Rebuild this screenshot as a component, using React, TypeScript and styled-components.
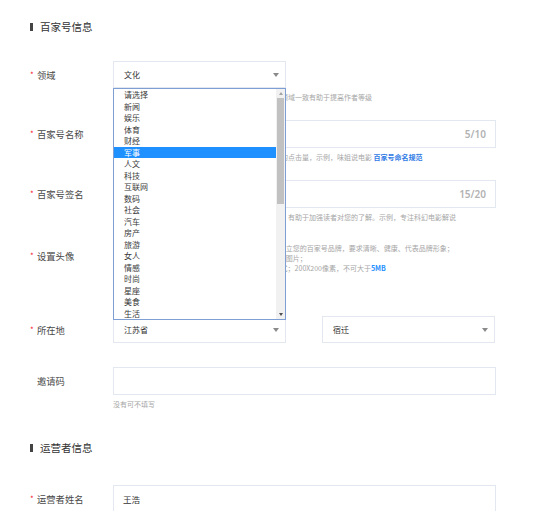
import React from "react";
import styled, { createGlobalStyle } from "styled-components";

const GlobalStyle = createGlobalStyle`
  body {
    margin: 0;
    background: #ffffff;
    font-family: "Noto Sans CJK SC", "Noto Sans", sans-serif;
    color: #333;
  }
`;

const fields = [
  "请选择", "新闻", "娱乐", "体育", "财经", "军事", "人文", "科技", "互联网", "数码",
  "社会", "汽车", "房产", "旅游", "女人", "情感", "时尚", "星座", "美食", "生活",
];

const App = (): JSX.Element => {
  return (
    <Page>
      <GlobalStyle />
      <SectionTitle $top={20}>百家号信息</SectionTitle>
      <Form $top={27}>
        <Row $mb={18}>
          <Label required>领域</Label>
          <Field>
            <SelectBox>
              文化
              <Caret />
            </SelectBox>
            <Hint>请选择与您发布内容相符的领域，保持发文内容与所选领域一致有助于提高作者等级</Hint>
            <Dropdown>
              <OptionList>
                {fields.map((f) => (
                  <Option key={f} $active={f === "军事"}>
                    {f}
                  </Option>
                ))}
              </OptionList>
              <ScrollTrack>
                <ScrollButton>
                  <ArrowUp />
                </ScrollButton>
                <ScrollThumb />
                <ScrollSpacer />
                <ScrollButton>
                  <ArrowDown />
                </ScrollButton>
              </ScrollTrack>
            </Dropdown>
          </Field>
        </Row>

        <Row $mb={18}>
          <Label required>百家号名称</Label>
          <Field>
            <InputBox>
              <InputValue />
              <Counter>5/10</Counter>
            </InputBox>
            <Hint>
              名称需简洁易记，与账号定位相符，将有助于提升文章的点击量，示例，味姐说电影 <Link>百家号命名规范</Link>
            </Hint>
          </Field>
        </Row>

        <Row $mb={20}>
          <Label required>百家号签名</Label>
          <Field>
            <InputBox>
              <InputValue />
              <Counter>15/20</Counter>
            </InputBox>
            <Hint>签名可以是您的个人介绍、创作领域或账号的定位描述，有助于加强读者对您的了解。示例，专注科幻电影解说</Hint>
          </Field>
        </Row>

        <Row $mb={18}>
          <Label required>设置头像</Label>
          <Field>
            <AvatarRow>
              <AvatarBox>+</AvatarBox>
              <AvatarNotes>
                <NoteLine>1.请上传清晰头像，头像用于建立您的百家号品牌，要求清晰、健康、代表品牌形象；</NoteLine>
                <NoteLine>2.请勿使用含二维码违规信息的图片；</NoteLine>
                <NoteLine>
                  3.图片支持jpg、jpeg、png格式；200X200像素，不可大于<Strong>5MB</Strong>
                </NoteLine>
              </AvatarNotes>
            </AvatarRow>
          </Field>
        </Row>

        <Row $mb={23}>
          <Label required>所在地</Label>
          <Field>
            <SelectPair>
              <SelectBox>
                江苏省
                <Caret />
              </SelectBox>
              <SelectBox>
                宿迁
                <Caret />
              </SelectBox>
            </SelectPair>
          </Field>
        </Row>

        <Row $mb={0}>
          <Label>邀请码</Label>
          <Field>
            <InputBox>
              <InputValue />
            </InputBox>
            <Hint>没有可不填写</Hint>
          </Field>
        </Row>
      </Form>

      <SectionTitle $top={32}>运营者信息</SectionTitle>
      <Form $top={30}>
        <Row $mb={0}>
          <Label required>运营者姓名</Label>
          <Field>
            <InputBox>
              <InputValue>王浩</InputValue>
            </InputBox>
          </Field>
        </Row>
      </Form>
    </Page>
  );
};

const Label = ({ required, children }: { required?: boolean; children: React.ReactNode }) => (
  <LabelCell>
    <Star $show={!!required}>*</Star>
    <LabelText>{children}</LabelText>
  </LabelCell>
);

const Page = styled.div`
  width: 545px;
  height: 511px;
  overflow: hidden;
  padding-left: 29px;
  box-sizing: border-box;
`;

const SectionTitle = styled.div<{ $top: number }>`
  display: flex;
  align-items: center;
  height: 14px;
  margin-top: ${(p) => p.$top}px;
  font-size: 10.5px;
  line-height: 14px;
  color: #333;

  &::before {
    content: "";
    display: block;
    width: 3px;
    height: 8px;
    margin: 0 7px 0 1px;
    background: #444;
  }
`;

const Form = styled.div<{ $top: number }>`
  display: flex;
  flex-direction: column;
  margin-top: ${(p) => p.$top}px;
`;

const Row = styled.div<{ $mb: number }>`
  display: flex;
  align-items: flex-start;
  margin-bottom: ${(p) => p.$mb}px;
`;

const LabelCell = styled.div`
  display: flex;
  align-items: center;
  width: 84px;
  height: 28px;
  flex-shrink: 0;
`;

const Star = styled.span<{ $show: boolean }>`
  width: 8px;
  padding-left: 1px;
  box-sizing: border-box;
  font-size: 8px;
  line-height: 8px;
  color: #f5222d;
  visibility: ${(p) => (p.$show ? "visible" : "hidden")};
`;

const LabelText = styled.span`
  font-size: 9.3px;
  line-height: 12px;
  color: #484848;
  white-space: nowrap;
`;

const Field = styled.div`
  position: relative;
  width: 383px;
  display: flex;
  flex-direction: column;
`;

const SelectPair = styled.div`
  display: flex;
  gap: 36px;
`;

const SelectBox = styled.div`
  display: flex;
  align-items: center;
  justify-content: space-between;
  width: 173px;
  height: 27px;
  box-sizing: border-box;
  padding: 0 6px 0 10px;
  border: 1px solid #e3e7ef;
  background: #fff;
  font-size: 8px;
  color: #333;
`;

const Caret = styled.span`
  width: 0;
  height: 0;
  border-left: 3px solid transparent;
  border-right: 3px solid transparent;
  border-top: 4px solid #8a8a8a;
`;

const InputBox = styled.div`
  display: flex;
  align-items: center;
  height: 28px;
  box-sizing: border-box;
  padding: 0 9px;
  border: 1px solid #e3e7ef;
  background: #fff;
`;

const InputValue = styled.span`
  flex: 1;
  font-size: 8.5px;
  color: #333;
`;

const Counter = styled.span`
  font-family: "Noto Sans", sans-serif;
  font-size: 10px;
  font-weight: 600;
  color: #b3b3b3;
`;

const Hint = styled.div`
  margin-top: 4px;
  font-size: 7px;
  line-height: 10px;
  color: #a6a6a6;
  white-space: nowrap;
`;

const Link = styled.span`
  color: #2f7be5;
  font-weight: 600;
`;

const Strong = styled.span`
  color: #1f8fff;
  font-weight: 700;
`;

const AvatarRow = styled.div`
  display: flex;
  gap: 20px;
  height: 56px;
`;

const AvatarBox = styled.div`
  width: 56px;
  height: 56px;
  box-sizing: border-box;
  border: 1px dashed #d9d9d9;
  display: flex;
  align-items: center;
  justify-content: center;
  color: #ccc;
  font-size: 18px;
`;

const AvatarNotes = styled.div`
  display: flex;
  flex-direction: column;
  padding-top: 1px;
`;

const NoteLine = styled.div`
  font-size: 7px;
  line-height: 10px;
  color: #a6a6a6;
  white-space: nowrap;
`;

const Dropdown = styled.div`
  position: absolute;
  top: 27px;
  left: 0;
  z-index: 10;
  display: flex;
  width: 173px;
  height: 232px;
  box-sizing: border-box;
  border: 1px solid #7f9fd4;
  background: #fff;
  overflow: hidden;
`;

const OptionList = styled.div`
  flex: 1;
  display: flex;
  flex-direction: column;
  overflow: hidden;
`;

const Option = styled.div<{ $active: boolean }>`
  flex-shrink: 0;
  height: 11.5px;
  padding-left: 10px;
  font-size: 8px;
  line-height: 11.5px;
  color: ${(p) => (p.$active ? "#fff" : "#3a3a3a")};
  background: ${(p) => (p.$active ? "#1e90ff" : "transparent")};
  white-space: nowrap;
`;

const ScrollTrack = styled.div`
  display: flex;
  flex-direction: column;
  width: 9px;
  flex-shrink: 0;
  background: #f1f1f1;
`;

const ScrollButton = styled.div`
  height: 9px;
  display: flex;
  align-items: center;
  justify-content: center;
`;

const ArrowUp = styled.span`
  width: 0;
  height: 0;
  border-left: 2.5px solid transparent;
  border-right: 2.5px solid transparent;
  border-bottom: 3px solid #a3a3a3;
`;

const ArrowDown = styled.span`
  width: 0;
  height: 0;
  border-left: 2.5px solid transparent;
  border-right: 2.5px solid transparent;
  border-top: 3px solid #505050;
`;

const ScrollThumb = styled.div`
  height: 106px;
  margin: 0 1px;
  background: #c1c1c1;
`;

const ScrollSpacer = styled.div`
  flex: 1;
`;

export default App;
